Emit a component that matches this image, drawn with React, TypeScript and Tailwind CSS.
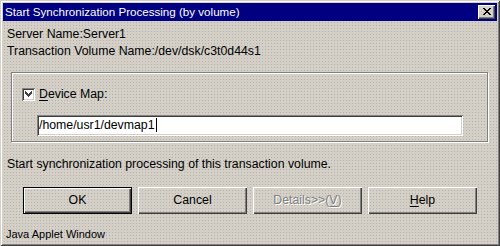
import React from "react";

const font = { fontFamily: '"Liberation Sans", Arial, sans-serif' };

interface ButtonProps {
  children: React.ReactNode;
  isDefault?: boolean;
  disabled?: boolean;
}

const WinButton: React.FC<ButtonProps> = ({ children, isDefault, disabled }) => (
  <button
    disabled={disabled}
    className={`w-[109px] h-[27px] flex items-center justify-center text-[12.3px] bg-transparent ${
      isDefault
        ? "border border-black shadow-[inset_1px_1px_0_#fff,inset_-1px_-1px_0_#404040,inset_-2px_-2px_0_#808080]"
        : "shadow-[inset_1px_1px_0_#fff,inset_-1px_-1px_0_#404040,inset_-2px_-2px_0_#808080]"
    } ${disabled ? "text-[#808080] [text-shadow:1px_1px_0_#fff]" : "text-black"}`}
  >
    {children}
  </button>
);

export default function App() {
  return (
    <div
      style={font}
      className="w-[500px] h-[246px] p-[3px] flex flex-col bg-[#d4d0c8] bg-[radial-gradient(#b4b1aa_0.6px,transparent_0.7px)] bg-[size:3px_3px] shadow-[inset_1px_1px_0_#d4d0c8,inset_-1px_-1px_0_#404040,inset_2px_2px_0_#fff,inset_-2px_-2px_0_#808080] text-black overflow-hidden"
    >
      {/* Title bar */}
      <div className="h-[18px] bg-[#000080] flex items-center justify-between pl-[2px] pr-[2px]">
        <span className="text-white text-[11.6px] leading-none">
          Start Synchronization Processing (by volume)
        </span>
        <div className="w-[17px] h-[14px] bg-[#d4d0c8] flex items-center justify-center shadow-[inset_1px_1px_0_#fff,inset_-1px_-1px_0_#404040,inset_-2px_-2px_0_#808080]">
          <svg width="8" height="7" viewBox="0 0 8 7" shapeRendering="crispEdges">
            <path
              fill="#000"
              d="M0 0h2v1h-2zM6 0h2v1h-2zM1 1h2v1h-2zM5 1h2v1h-2zM2 2h4v1h-4zM3 3h2v1h-2zM2 4h4v1h-4zM1 5h2v1h-2zM5 5h2v1h-2zM0 6h2v1h-2zM6 6h2v1h-2z"
            />
          </svg>
        </div>
      </div>

      {/* Info */}
      <div className="mt-[5px] pl-[4px] text-[12.3px] leading-[17px]">
        <div>Server Name:Server1</div>
        <div>Transaction Volume Name:/dev/dsk/c3t0d44s1</div>
      </div>

      {/* Group box */}
      <div className="mt-[12px] ml-[8px] w-[477px] h-[72px] border border-[#808080] shadow-[1px_1px_0_#fff,inset_1px_1px_0_#fff] pl-[10px] pt-[15px]">
        <div className="flex items-center h-[13px]">
          <div className="w-[13px] h-[13px] bg-white flex items-center justify-center shadow-[inset_1px_1px_0_#808080,inset_-1px_-1px_0_#fff,inset_2px_2px_0_#404040,inset_-2px_-2px_0_#d4d0c8]">
            <svg width="7" height="7" viewBox="0 0 7 7" shapeRendering="crispEdges">
              <path
                fill="#404040"
                d="M6 0h1v3h-1zM5 1h1v3h-1zM4 2h1v3h-1zM3 3h1v3h-1zM2 2h1v3h-1zM1 1h1v3h-1zM0 0h1v3h-1z"
              />
            </svg>
          </div>
          <span className="ml-[4px] text-[12.3px] leading-none">
            <span className="underline underline-offset-2">D</span>evice Map:
          </span>
        </div>
        <div className="mt-[14px] ml-[15px] w-[426px] h-[21px] bg-white flex items-center pl-[2px] shadow-[inset_1px_1px_0_#808080,inset_-1px_-1px_0_#fff,inset_2px_2px_0_#404040,inset_-2px_-2px_0_#d4d0c8]">
          <span className="text-[12.3px] leading-none">/home/usr1/devmap1</span>
          <span className="ml-[1px] w-px h-[14px] bg-black" />
        </div>
      </div>

      <div className="mt-[14px] pl-[4px] text-[12.3px] leading-[17px]">
        Start synchronization processing of this transaction volume.
      </div>

      {/* Buttons */}
      <div className="mt-[14px] ml-[20px] flex gap-[6px]">
        <WinButton isDefault>OK</WinButton>
        <WinButton>Cancel</WinButton>
        <WinButton disabled>
          Details&gt;&gt;(<span className="underline underline-offset-2">V</span>)
        </WinButton>
        <WinButton>
          <span className="underline underline-offset-2">H</span>elp
        </WinButton>
      </div>

      <div className="mt-[12px] pl-[3px] text-[11px] leading-[17px]">Java Applet Window</div>
    </div>
  );
}
